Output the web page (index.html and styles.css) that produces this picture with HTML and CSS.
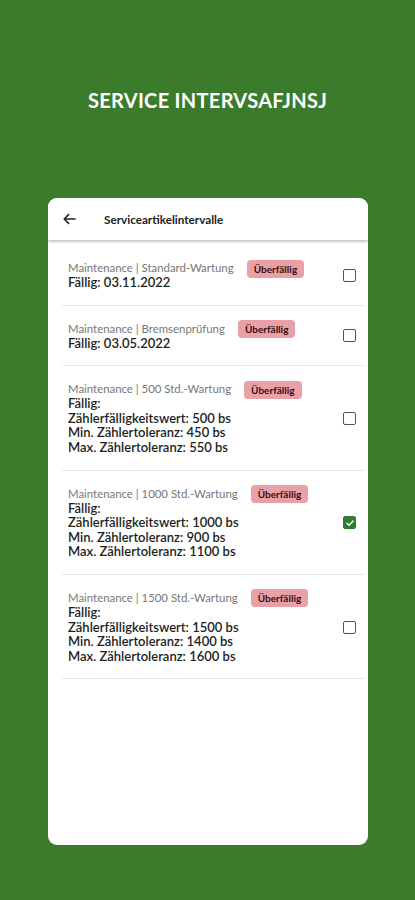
FILE: index.html
```html
<!DOCTYPE html>
<html lang="de">
<head>
<meta charset="utf-8">
<title>Service Intervalle</title>
<link rel="stylesheet" href="styles.css">
</head>
<body>
<main class="screen">
  <h1 class="headline">SERVICE INTERVSAFJNSJ</h1>
  <section class="card">
    <header class="appbar">
      <svg class="back" viewBox="0 0 16 16" width="14" height="14" aria-hidden="true">
        <path d="M15 8H2.5M7.5 3L2.5 8l5 5" fill="none" stroke="#222" stroke-width="1.8" stroke-linecap="round" stroke-linejoin="round"/>
      </svg>
      <span class="appbar-title">Serviceartikelintervalle</span>
    </header>
    <ul class="list">
      <li class="item">
        <div class="info">
          <div class="row"><span class="cat">Maintenance | Standard-Wartung</span><span class="badge">Überfällig</span></div>
          <div class="line">Fällig: 03.11.2022</div>
        </div>
        <span class="check"></span>
      </li>
      <li class="item">
        <div class="info">
          <div class="row"><span class="cat">Maintenance | Bremsenprüfung</span><span class="badge">Überfällig</span></div>
          <div class="line">Fällig: 03.05.2022</div>
        </div>
        <span class="check"></span>
      </li>
      <li class="item">
        <div class="info">
          <div class="row"><span class="cat">Maintenance | 500 Std.-Wartung</span><span class="badge">Überfällig</span></div>
          <div class="line">Fällig:</div>
          <div class="line">Zählerfälligkeitswert: 500 bs</div>
          <div class="line">Min. Zählertoleranz: 450 bs</div>
          <div class="line">Max. Zählertoleranz: 550 bs</div>
        </div>
        <span class="check"></span>
      </li>
      <li class="item">
        <div class="info">
          <div class="row"><span class="cat">Maintenance | 1000 Std.-Wartung</span><span class="badge">Überfällig</span></div>
          <div class="line">Fällig:</div>
          <div class="line">Zählerfälligkeitswert: 1000 bs</div>
          <div class="line">Min. Zählertoleranz: 900 bs</div>
          <div class="line">Max. Zählertoleranz: 1100 bs</div>
        </div>
        <span class="check checked">
          <svg viewBox="0 0 12 12" width="10" height="10" aria-hidden="true"><path d="M2.3 6.2l2.5 2.4 4.9-5" fill="none" stroke="#fff" stroke-width="1.7" stroke-linecap="round" stroke-linejoin="round"/></svg>
        </span>
      </li>
      <li class="item">
        <div class="info">
          <div class="row"><span class="cat">Maintenance | 1500 Std.-Wartung</span><span class="badge">Überfällig</span></div>
          <div class="line">Fällig:</div>
          <div class="line">Zählerfälligkeitswert: 1500 bs</div>
          <div class="line">Min. Zählertoleranz: 1400 bs</div>
          <div class="line">Max. Zählertoleranz: 1600 bs</div>
        </div>
        <span class="check"></span>
      </li>
    </ul>
  </section>
</main>
</body>
</html>
```

FILE: styles.css
```css
* { box-sizing: border-box; }
html, body { margin: 0; padding: 0; }
body {
  background: #3a7b2c;
  font-family: Lato, "Noto Sans", "Liberation Sans", sans-serif;
  color: #1e1e1e;
}
.screen {
  width: 415px;
  height: 900px;
  padding-top: 87px;
  display: flex;
  flex-direction: column;
  align-items: center;
}
.headline {
  margin: 0;
  height: 26px;
  line-height: 26px;
  color: #fff;
  font-size: 20px;
  font-weight: 700;
  letter-spacing: 0.3px;
}
.card {
  margin-top: 85px;
  width: 320px;
  height: 647px;
  margin-left: 1px;
  background: #fff;
  border-radius: 9px;
  overflow: hidden;
}
.appbar {
  height: 42px;
  display: flex;
  align-items: center;
  padding-left: 14px;
  background: #fff;
  box-shadow: 0 2px 2px rgba(0, 0, 0, 0.22);
  position: relative;
  z-index: 1;
}
.back { flex: none; }
.appbar-title {
  margin-left: 28px;
  font-size: 11.7px;
  font-weight: 700;
  color: #222;
}
.list {
  list-style: none;
  margin: 0;
  padding: 5px 0 0;
}
.item {
  margin: 0 2px 0 14px;
  padding: 16px 10px 15px 6px;
  border-bottom: 1px solid #e9e9e9;
  display: flex;
  align-items: center;
  justify-content: space-between;
}
.info { display: flex; flex-direction: column; }
.row {
  display: flex;
  align-items: center;
  height: 14px;
}
.cat {
  font-size: 11.4px;
  color: #777;
  line-height: 14px;
}
.badge {
  margin-left: 13px;
  background: #e9a0a6;
  color: #3b0d10;
  font-size: 10px;
  font-weight: 700;
  line-height: 18px;
  padding: 0 7px;
  border-radius: 4px;
  margin-top: 1px;
}
.line {
  font-size: 13px;
  font-weight: 600;
  line-height: 14.6px;
  color: #1e1e1e;
}
.check {
  flex: none;
  width: 13px;
  height: 13px;
  border: 1.6px solid #555;
  border-radius: 2px;
  display: flex;
  align-items: center;
  justify-content: center;
}
.check.checked {
  background: #2e7d32;
  border-color: #2e7d32;
}
```
